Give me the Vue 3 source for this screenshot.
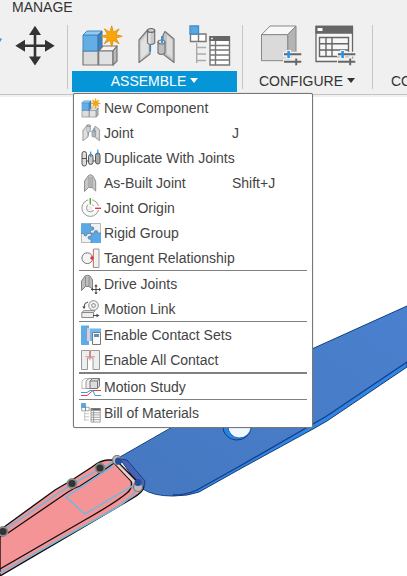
<script setup>
import { ref } from 'vue'

const menuOpen = ref(true)

const sections = [
  [
    { label: 'New Component', icon: 'cubes', box: 42 },
    { label: 'Joint', icon: 'joint', box: 42, key: 'J' },
    { label: 'Duplicate With Joints', icon: 'duplicate', box: 20 },
    { label: 'As-Built Joint', icon: 'asbuilt', box: 20, key: 'Shift+J' },
    { label: 'Joint Origin', icon: 'origin', box: 20 },
    { label: 'Rigid Group', icon: 'rigid', box: 20 },
    { label: 'Tangent Relationship', icon: 'tangent', box: 20 },
  ],
  [
    { label: 'Drive Joints', icon: 'drive', box: 20 },
    { label: 'Motion Link', icon: 'link', box: 20 },
  ],
  [
    { label: 'Enable Contact Sets', icon: 'contact', box: 20 },
    { label: 'Enable All Contact', icon: 'allcontact', box: 20 },
  ],
  [{ label: 'Motion Study', icon: 'study', box: 20 }],
  [{ label: 'Bill of Materials', icon: 'bom', box: 42 }],
]
</script>

<template>
  <div class="app">
    <svg class="defs" width="0" height="0" aria-hidden="true">
      <g id="cubes" stroke-linejoin="round">
        <path d="M2 26H17V40H2Z" fill="#dcdcdc" stroke="#777" stroke-width="1.2" />
        <path d="M17.7 26L22 21H36L32 26Z" fill="#f4f4f4" stroke="#777" stroke-width="1.2" />
        <path d="M17.7 26H32V40H17.7Z" fill="#e2e2e2" stroke="#777" stroke-width="1.2" />
        <path d="M32 26L36 21V36L32 40Z" fill="#b9b9b9" stroke="#777" stroke-width="1.2" />
        <path d="M2 10H17V26H2Z" fill="#64aee6" stroke="#4389c0" />
        <path d="M2 10L6 6H21L17 10Z" fill="#8fcbf5" stroke="#4389c0" />
        <path d="M17 10L21 6V21L17 26Z" fill="#3e82bb" stroke="#3a77a9" />
        <path
          d="M30.7 .8L32.4 7.2L38.1 3.9L34.8 9.6L41.2 11.3L34.8 13L38.1 18.7L32.4 15.4L30.7 21.8L29 15.4L23.3 18.7L26.6 13L20.2 11.3L26.6 9.6L23.3 3.9L29 7.2Z"
          fill="#f8a60c" stroke="#e08d00" stroke-width=".8"
        />
      </g>

      <g id="joint" stroke="#777" stroke-width="1.2" stroke-linejoin="round">
        <path d="M4 15L12.5 5H15V29L4 37.5Z" fill="#cdcdcd" />
        <path d="M6 17L13 8V27L6 34Z" fill="#e1e1e1" stroke="none" />
        <path d="M12.5 5.500V18Q16 21 19.700 18V5.500Z" fill="#c9c9c9" />
        <path d="M14.500 7.500V18.500" stroke="#e4e4e4" stroke-width="2" />
        <ellipse cx="16.1" cy="5.4" rx="3.6" ry="1.900" fill="#ccc" stroke="#666" />
        <path d="M15.4 20V26.5" stroke="#168de2" stroke-width="1.4" />
        <path d="M30 6.5L39 14V37.5L28 29V10Z" fill="#c4c4c4" />
        <path d="M32 10L37 15V33L32 29Z" fill="#dcdcdc" stroke="none" />
        <path d="M23 17V28Q26 31 30 28V17Z" fill="#bebebe" />
        <ellipse cx="26.5" cy="17" rx="3.5" ry="2" fill="#e0e0e0" />
        <path d="M27 11V18" stroke="#168de2" stroke-width="1.6" />
      </g>

      <g id="bom" fill="none" stroke="#777" stroke-width="1.4">
        <path d="M1.5 9H9.5V16.5H1.5ZM9.5 9H17V16.5H9.5Z" fill="#fff" />
        <path d="M1 1H9.5V9H1Z" fill="#58a8e3" stroke="#438fca" />
        <path d="M7.7 18V38M7.7 22.5H17M7.7 29H17M7.7 35.5H17" stroke="#aaa" />
        <path d="M21 12H40.5V40H21Z" fill="#fff" />
        <path d="M20.3 11H41V16H20.3Z" fill="#666" stroke="none" />
        <path d="M22 13.5H24" stroke="#ddd" />
        <path d="M26.5 16V40M21 20.5H40M21 25H40M21 30H40M21 35H40" />
      </g>

      <g id="sliders" fill="none">
        <path d="M22 29.3H41M22 36.7H41" stroke="#f0f0f0" stroke-width="5" />
        <path d="M27.6 25V34M35.2 32.5V41" stroke="#f0f0f0" stroke-width="5" />
        <path d="M23 29.3H40.3M23 36.7H40.3" stroke="#666" stroke-width="2" />
        <path d="M35.2 33.5V40.3" stroke="#666" stroke-width="2" />
        <path d="M27.6 26V33" stroke="#2196f3" stroke-width="2.6" />
      </g>

      <g id="duplicate" stroke="#555" stroke-width="1">
        <rect x="1" y="3.5" width="4.5" height="14.5" rx="2.2" fill="#ddd" />
        <path d="M1 10.5H5.5" />
        <rect x="7.5" y="6.5" width="4.5" height="10" rx="2.2" fill="#c9c9c9" />
        <rect x="14.5" y="5" width="4.5" height="11" rx="2.2" fill="#aaa" />
        <path d="M5.5 13H7.5M12 13H14.5" />
        <path d="M9.7 3.5V9M16.8 1.5V7" stroke="#2c91d6" stroke-width="1.2" />
      </g>

      <g id="asbuilt" stroke="#888" stroke-width=".9" stroke-linejoin="round">
        <path d="M3.5 8L7.5 2.500Q9.5 1 11.5 2.500L14.7 8V18L11 14.5H7.5L3.5 18.5Z" fill="#c6c6c6" />
        <path d="M7.5 3V14.5M11.5 3V14.5" stroke="#aaa" />
        <path d="M8.2 4H10.8V14H8.2Z" fill="#b0b0b0" stroke="none" />
      </g>

      <g id="origin" fill="none">
        <circle cx="9.3" cy="10" r="8.4" stroke="#999" fill="#fafafa" />
        <circle cx="9.3" cy="10" r="3.8" stroke="#999" />
        <path d="M9.3 10V-.2M9.3 10H20" stroke="#fff" stroke-width="4" />
        <circle cx="9.3" cy="10" r="2.2" fill="#eee" />
        <path d="M9.3 0V6.5" stroke="#59a62a" stroke-width="1.4" />
        <path d="M14 10.3H20" stroke="#e23535" stroke-width="1.4" />
      </g>

      <g id="rigid">
        <path d="M.4 .5H19.600V19.600H.4Z" fill="#f1f1f1" stroke="#999" stroke-width=".7" />
        <path d="M0 .5H9.5V4Q13 3 13 6Q12.500 8 9.500 7V10.500H6Q6.500 13 4.500 13Q2.500 13 3 10.500H0Z" fill="#5ba9e4" />
        <path d="M10 20V16Q7 17 7 14.500Q7 12.500 10 13.500V10H13.500Q12.500 7.500 15 7.500Q17.500 7.500 16.500 10H20V20Z" fill="#5ba9e4" />
        <path
          d="M9.500 .5V4Q13 3 13 6Q12.500 8 9.500 7V10.500H6Q6.500 13 4.500 13Q2.500 13 3 10.500H0M10 20V16Q7 17 7 14.500Q7 12.500 10 13.500V10H13.500Q12.500 7.500 15 7.500Q17.500 7.500 16.500 10H20"
          fill="none" stroke="#53799a" stroke-width=".7"
        />
      </g>

      <g id="tangent">
        <circle cx="6.3" cy="10.2" r="5.4" fill="#f4f4f4" stroke="#777" />
        <path d="M12.500 1H18V19.500H12.500Z" fill="#f1f1f1" stroke="#999" />
        <path d="M12.300 1V19.500" stroke="#e57373" stroke-width="1" />
        <circle cx="11" cy="10" r="1.700" fill="#d93636" />
      </g>

      <g id="drive">
        <path d="M.5 7L4 2Q6.500 .5 9 2L11.500 6V15L8 12.500H4.500L.5 16.500Z" fill="#bcbcbc" stroke="#777" stroke-width=".9" />
        <path d="M4.500 3V12.500M8 3V12.500" stroke="#888" stroke-width=".9" />
        <path d="M15 11V20M10.500 15.500H19.500" stroke="#444" stroke-width="1" />
        <path d="M15 10.300L13.300 12.500H16.700ZM15 20.500L13.300 18.500H16.700ZM10 15.500L12 13.800V17.200ZM20 15.500L18 13.800V17.200Z" fill="#444" />
      </g>

      <g id="link" fill="none" stroke="#888">
        <circle cx="12.500" cy="6.500" r="4.800" fill="#f3f3f3" />
        <circle cx="12.500" cy="6.500" r="1.900" />
        <path d="M7 3Q3 3.500 3 8" stroke="#444" />
        <path d="M3 10L1.300 7.500H4.700Z" fill="#444" stroke="none" />
        <path d="M.8 13.500L3 11.700H14L12.500 13.500V18.500H.8ZM.8 13.500H12.500" fill="#eee" />
        <path d="M12 16.500H16" stroke="#444" />
        <path d="M18.500 16.500L15.500 14.700V18.300Z" fill="#444" stroke="none" />
      </g>

      <g id="contact">
        <path d="M0 .5H8V3.500H6V16H8V20H0Z" fill="#5fabe7" />
        <path d="M8.500 3.500H20V7H11V16H8.500Z" fill="#74b6ea" />
        <path d="M7 3.500V16" stroke="#e98e8e" />
        <path d="M11.500 7.500H19.500V19.500H11.500Z" fill="#fafafa" stroke="#777" />
        <path d="M13 9H18V12H13Z" fill="#4b93cc" />
      </g>

      <g id="allcontact" fill="#eee" stroke="#999">
        <path d="M.5 .5H8.500V8H6.500V19.500H.5Z" />
        <path d="M9.500 .5H18.500V19.500H12V8H9.500Z" />
        <path d="M9 0V10.500M4.500 6.700H14" stroke="#ee8585" />
      </g>

      <g id="study" stroke-linejoin="round">
        <path d="M1 4L4 1.500H10V9L8 11.500H1Z" fill="#fff" stroke="#bbb" />
        <path d="M5 4L8 1.500H14V9L12 11.500H5Z" fill="#eee" stroke="#999" />
        <path d="M9 4L11.500 1.500H18.500V9L16.500 11.500H9ZM9 4H16.500V11.500M16.500 4L18.500 1.500" fill="#ddd" stroke="#777" />
        <path d="M0 18.500H6L12 13.500H20" fill="none" stroke="#df4242" />
        <path d="M0 15.500H6L9 13.500H12L14 18.500H20" fill="none" stroke="#369bdb" />
      </g>
    </svg>

    <header class="toolbar">
      <nav class="tabs"><a href="#manage">MANAGE</a></nav>
      <div class="ribbon">
        <section class="group modify">
          <div class="tools">
            <svg width="2" height="42" viewBox="0 0 2 42"><path d="M0 13L2 14L0 17Z" fill="#3a9edb" /></svg>
            <button class="tool" aria-label="Move">
              <svg width="42" height="42" viewBox="0 0 42 42">
                <path d="M21 6V36M6 20.700H36" stroke="#333" stroke-width="2.600" />
                <path d="M21 .8L15 10H27ZM21 40.600L15 31.400H27ZM1.300 20.700L11 14.700V26.700ZM40.700 20.700L31 14.700V26.700Z" fill="#333" />
              </svg>
            </button>
          </div>
        </section>

        <section class="group assemble">
          <div class="tools">
            <button v-for="name in ['cubes', 'joint', 'bom']" :key="name" class="tool" :aria-label="name">
              <svg width="42" height="42" viewBox="0 0 42 42"><use :href="'#' + name" /></svg>
            </button>
          </div>
          <button class="title active" :aria-expanded="menuOpen" @click="menuOpen = !menuOpen">
            ASSEMBLE<span class="caret"></span>
          </button>

          <div v-if="menuOpen" class="menu" role="menu">
            <div v-for="(items, i) in sections" :key="i" class="section" :class="{ thick: i === 3 }" role="group">
              <button v-for="item in items" :key="item.label" class="item" role="menuitem">
                <svg width="20" height="20" :viewBox="`0 0 ${item.box} ${item.box}`"><use :href="'#' + item.icon" /></svg>
                <span>{{ item.label }}</span>
                <span v-if="item.key">{{ item.key }}</span>
              </button>
            </div>
          </div>
        </section>

        <section class="group configure">
          <div class="tools">
            <button class="tool" aria-label="Configure">
              <svg width="42" height="42" viewBox="0 0 42 42">
                <g stroke="#888" stroke-linejoin="round">
                  <path d="M.5 9.700L9 1H35L26.700 9.700Z" fill="#f8f8f8" />
                  <path d="M26.700 9.700L35 1V27L26.700 35.700Z" fill="#b4b4b4" />
                  <path d="M.5 9.700H26.700V35.700H.5Z" fill="#dadada" />
                </g>
                <use href="#sliders" />
              </svg>
            </button>
            <button class="tool" aria-label="Configuration table">
              <svg width="42" height="42" viewBox="0 0 42 42">
                <path d="M1 1.500H37.500V36.500H1Z" fill="#f7f7f7" stroke="#666" stroke-width="1.300" />
                <path d="M.5 .8H38V8.700H.5Z" fill="#666" />
                <path d="M2.500 3H7.500V6H2.500Z" fill="#fff" />
                <path
                  d="M4.500 12.500H33.500V31.500H4.500ZM11 12.500V31.500M17 12.500V31.500M4.500 18.700H33.500M4.500 25H33.500"
                  fill="none" stroke="#666" stroke-width="1.400"
                />
                <use href="#sliders" />
              </svg>
            </button>
          </div>
          <button class="title">CONFIGURE<span class="caret"></span></button>
        </section>

        <section class="group more">
          <div class="tools"></div>
          <button class="title">CO</button>
        </section>
      </div>
    </header>

    <main class="canvas">
      <svg viewBox="0 97 407 479" role="img" aria-label="Model view">
        <defs>
          <linearGradient id="blade" x1="0" y1="1" x2="1" y2="0">
            <stop offset="0" stop-color="#4578c0" />
            <stop offset="1" stop-color="#4a80ce" />
          </linearGradient>
        </defs>
        <path
          d="M407 306L313 348.500L168 429.500L120 457L143 489Q153 496 173 496Q188 496 199 492L240 469L313 429L327 421L407 367Z"
          fill="#2f86e6" stroke="#1b3c70" stroke-width="1"
        />
        <path
          d="M407 307L313 349.500L168 430L120 458L144 488Q153 495 173 495Q186 495 197 490L240 466L313 424L326 416.500L407 362Z"
          fill="url(#blade)"
        />
        <path d="M173 495Q186 495 197 490L240 466L313 424L326 416.500L407 362" fill="none" stroke="#123d88" stroke-width="1.300" />
        <path d="M223 426A14 13 0 0 0 251 428Z" fill="#2584e4" stroke="#123d88" />
        <path d="M228 426A11 11 0 0 0 251 427Z" fill="#eff8ff" stroke="#1c4f90" stroke-width=".8" />
        <path d="M120 459L127 460L145 481L144 488L138 484Z" fill="#4563b8" stroke="#1c3d83" />

        <path
          d="M0 530L55 490L72 480L92 467Q101 460 108 460H113L118 462L140 484Q146 488 141 492Q138 495 133 498L0 576Z"
          fill="#f59496" stroke="#111" stroke-width="1.400"
        />
        <path
          d="M0 537L8 533L68 492Q74 488 80 486L97 475L114 463L131 481Q133 488 127 493Q115 503 83 521L0 569"
          fill="none" stroke="#111" stroke-width="1.300"
        />
        <path d="M0 533L72 484L100 469L117 460M0 573L107 513Q131 500 138 488M113 466L66 497L85 514L134 485" fill="none" stroke="#79b7d9" stroke-width="1.600" />
        <path d="M114 461L137 485" stroke="#ddd5d2" stroke-width="2.500" />
        <path d="M116 460L139 484" stroke="#222" stroke-width=".8" />
        <g fill="#333" stroke="#888" stroke-width="1.800">
          <circle cx="3" cy="531.500" r="4.500" />
          <circle cx="72" cy="483.500" r="4.500" />
          <circle cx="100" cy="468" r="4.500" />
        </g>
        <g fill="#bbb" stroke="#777" stroke-width="1.200">
          <circle cx="138" cy="487" r="4.500" />
          <circle cx="117" cy="460" r="4.500" />
        </g>
        <circle cx="118.500" cy="461" r="3.500" fill="#244d9a" />
        <circle cx="138" cy="482.500" r="3.500" fill="#244d9a" />
      </svg>
    </main>
  </div>
</template>

<style>
body {
  background: #fff;
}
</style>

<style scoped>
.app {
  min-height: 100vh;
  font-family: "Liberation Sans", Arial, sans-serif;
  font-size: 14px;
  color: #333;
  overflow: hidden;
}

.defs {
  position: absolute;
}

svg {
  display: block;
  flex: none;
}

button {
  margin: 0;
  padding: 0;
  border: 0;
  background: none;
  font: inherit;
  color: inherit;
  text-align: left;
  white-space: nowrap;
}

.toolbar {
  background: #f0f0f0;
  border-bottom: 2px solid #f0f0f0;
}

.tabs {
  padding-left: 12px;
  line-height: 14px;
}

.tabs a {
  color: inherit;
  text-decoration: none;
}

.ribbon {
  display: flex;
  padding: 11px 0 2px;
  border-bottom: 1px solid #c4c4c4;
}

.group {
  position: relative;
  display: flex;
  flex-direction: column;
  gap: 4px;
  flex: none;
  margin-right: 10px;
}

/* divider between the groups */
.group:not(.more)::after {
  content: "";
  position: absolute;
  top: 0;
  right: -6px;
  bottom: 3px;
  width: 1px;
  background: #c6c6c6;
}

.tools {
  display: flex;
  gap: 12px;
  height: 42px;
}

.modify {
  width: 62px;
}

.assemble .tools {
  padding: 0 6px 0 9px;
}

.configure .tools {
  padding: 0 10px 0 14px;
}

.more {
  flex: 1;
  min-width: 0;
  margin-right: 0;
  padding-left: 14px;
  overflow: hidden;
}

.title {
  display: flex;
  align-items: center;
  justify-content: center;
  gap: 4px;
  height: 21px;
  padding-bottom: 2px;
}

.more .title {
  justify-content: flex-start;
}

.active {
  background: #0696d7;
  color: #fff;
}

.caret {
  border: 4px solid transparent;
  border-top: 5px solid currentColor;
  border-bottom: 0;
}

.menu {
  position: absolute;
  z-index: 2;
  top: 100%;
  left: 1px;
  width: 228px;
  margin-top: 1px;
  padding: 1px 5px 2px;
  border: 1px solid #777;
  border-radius: 2px;
  box-shadow: 0 0 1px #777;
  background: #fff;
  color: #444;
}

.section + .section {
  border-top: 1px solid #808080;
}

.section + .thick {
  border-top-width: 2px;
}

.item {
  display: grid;
  grid-template-columns: 20px 125px auto;
  align-items: center;
  column-gap: 3px;
  width: 100%;
  height: 25px;
  padding-left: 2px;
}

.item:hover {
  background: #e6f3fb;
}

.canvas svg {
  width: 100%;
}
</style>
